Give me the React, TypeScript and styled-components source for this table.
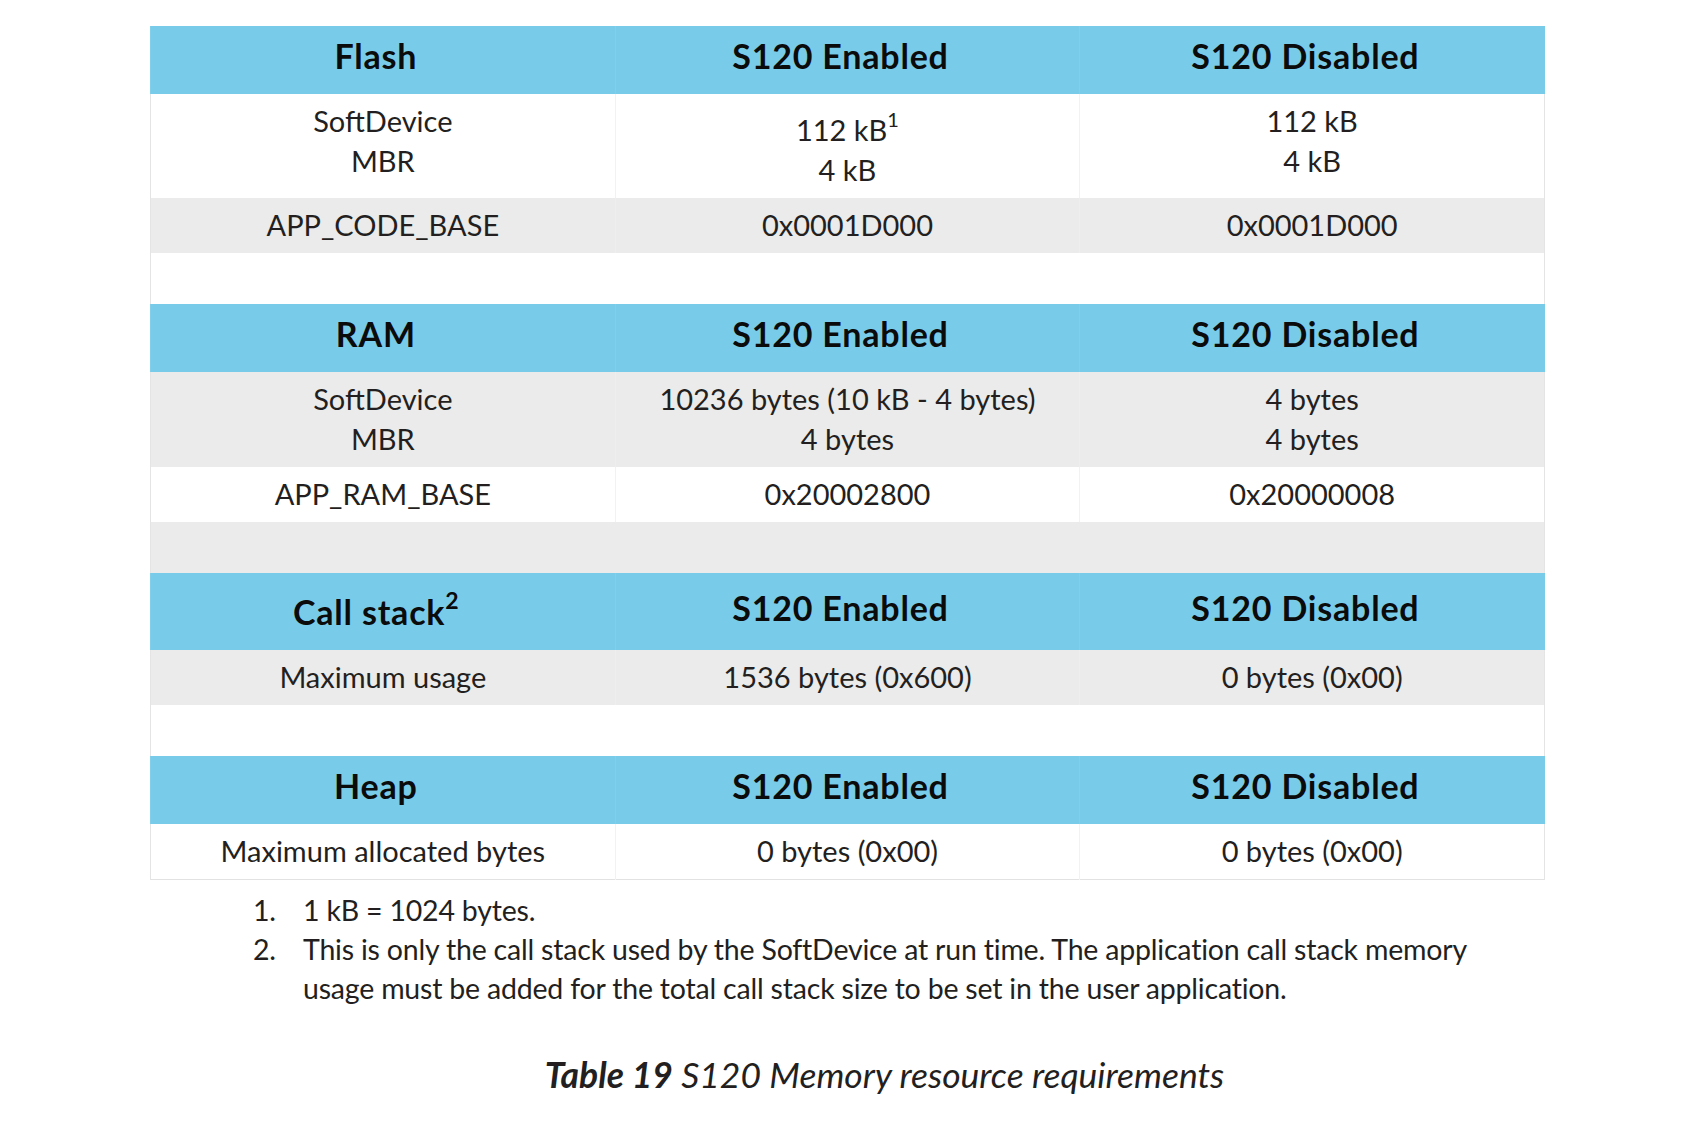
import React from 'react';
import styled, { createGlobalStyle } from 'styled-components';

type Tone = 'white' | 'gray';

interface Row {
  cells: React.ReactNode[];
  tone: Tone;
}

interface Section {
  head: React.ReactNode[];
  rows: Row[];
  spacer?: Tone;
}

const GlobalStyle = createGlobalStyle`
  html, body {
    margin: 0;
    padding: 0;
    background: #ffffff;
  }
  body {
    font-family: Lato, "Liberation Sans", sans-serif;
    color: #231f20;
  }
`;

const Page = styled.div`
  width: 1395px;
  margin-left: 150px;
  padding-top: 26px;
`;

const Table = styled.table`
  width: 100%;
  border-collapse: collapse;
  table-layout: fixed;
  border-bottom: 1px solid #e2e2e2;
`;

const HeadCell = styled.th`
  background: #79cce9;
  color: #0b0b0b;
  font-size: 34px;
  font-weight: 700;
  letter-spacing: 0.8px;
  line-height: 40px;
  padding: 10px 14px 18px 0;
  text-align: center;
  vertical-align: middle;
  border-left: 1px solid #80d0ec;
`;

const BodyCell = styled.td<{ $tone: Tone }>`
  background: ${(p) => (p.$tone === 'gray' ? '#ebebeb' : '#ffffff')};
  font-size: 29px;
  line-height: 40px;
  padding: 7px 8px 8px;
  text-align: center;
  vertical-align: top;
  border-left: 1px solid ${(p) => (p.$tone === 'gray' ? '#eeeeee' : '#f2f2f2')};
  border-right: 1px solid ${(p) => (p.$tone === 'gray' ? '#eeeeee' : '#f2f2f2')};

  &:first-child {
    border-left-color: #e4e4e4;
  }
  &:last-child {
    border-right-color: #e4e4e4;
  }
`;

const SpacerCell = styled.td<{ $tone: Tone }>`
  height: 51px;
  padding: 0;
  background: ${(p) => (p.$tone === 'gray' ? '#ebebeb' : '#ffffff')};
  border-left: 1px solid #e4e4e4;
  border-right: 1px solid #e4e4e4;
`;

const Sup = styled.sup`
  display: inline-block;
  font-size: 20px;
  line-height: 19px;
  vertical-align: 14px;
  padding-top: 9px;
`;

const HeadSup = styled.sup`
  display: inline-block;
  font-size: 23px;
  line-height: 21px;
  letter-spacing: 0;
  vertical-align: 16px;
  padding-top: 7px;
`;

const Notes = styled.ol`
  list-style: none;
  margin: 11px 0 0;
  padding: 0 0 0 103px;
  font-size: 28.5px;
  letter-spacing: -0.2px;
  line-height: 39px;
`;

const Note = styled.li`
  display: flex;
`;

const NoteNum = styled.span`
  flex: 0 0 50px;
`;

const NoteText = styled.span`
  flex: 1;
  max-width: 1180px;
`;

const Caption = styled.div`
  margin-top: 45px;
  padding-left: 74px;
  text-align: center;
  font-size: 35.5px;
  font-style: italic;
  line-height: 44px;

  strong {
    font-weight: 700;
  }
`;

const sections: Section[] = [
  {
    head: ['Flash', 'S120 Enabled', 'S120 Disabled'],
    rows: [
      {
        tone: 'white',
        cells: [
          <>SoftDevice<br />MBR</>,
          <>112 kB<Sup>1</Sup><br />4 kB</>,
          <>112 kB<br />4 kB</>,
        ],
      },
      { tone: 'gray', cells: ['APP_CODE_BASE', '0x0001D000', '0x0001D000'] },
    ],
    spacer: 'white',
  },
  {
    head: ['RAM', 'S120 Enabled', 'S120 Disabled'],
    rows: [
      {
        tone: 'gray',
        cells: [
          <>SoftDevice<br />MBR</>,
          <>10236 bytes (10 kB - 4 bytes)<br />4 bytes</>,
          <>4 bytes<br />4 bytes</>,
        ],
      },
      { tone: 'white', cells: ['APP_RAM_BASE', '0x20002800', '0x20000008'] },
    ],
    spacer: 'gray',
  },
  {
    head: [<>Call stack<HeadSup>2</HeadSup></>, 'S120 Enabled', 'S120 Disabled'],
    rows: [
      { tone: 'gray', cells: ['Maximum usage', '1536 bytes (0x600)', '0 bytes (0x00)'] },
    ],
    spacer: 'white',
  },
  {
    head: ['Heap', 'S120 Enabled', 'S120 Disabled'],
    rows: [
      { tone: 'white', cells: ['Maximum allocated bytes', '0 bytes (0x00)', '0 bytes (0x00)'] },
    ],
  },
];

const notes = [
  '1 kB = 1024 bytes.',
  'This is only the call stack used by the SoftDevice at run time. The application call stack memory usage must be added for the total call stack size to be set in the user application.',
];

const App: React.FC = () => {
  return (
    <>
      <GlobalStyle />
      <Page>
        <Table>
          {sections.map((section, si) => (
            <tbody key={si}>
              <tr>
                {section.head.map((h, i) => (
                  <HeadCell key={i}>{h}</HeadCell>
                ))}
              </tr>
              {section.rows.map((row, ri) => (
                <tr key={ri}>
                  {row.cells.map((c, ci) => (
                    <BodyCell key={ci} $tone={row.tone}>
                      {c}
                    </BodyCell>
                  ))}
                </tr>
              ))}
              {section.spacer && (
                <tr>
                  <SpacerCell colSpan={3} $tone={section.spacer} />
                </tr>
              )}
            </tbody>
          ))}
        </Table>

        <Notes>
          {notes.map((n, i) => (
            <Note key={i}>
              <NoteNum>{i + 1}.</NoteNum>
              <NoteText>{n}</NoteText>
            </Note>
          ))}
        </Notes>

        <Caption>
          <strong>Table 19</strong> S120 Memory resource requirements
        </Caption>
      </Page>
    </>
  );
};

export default App;
